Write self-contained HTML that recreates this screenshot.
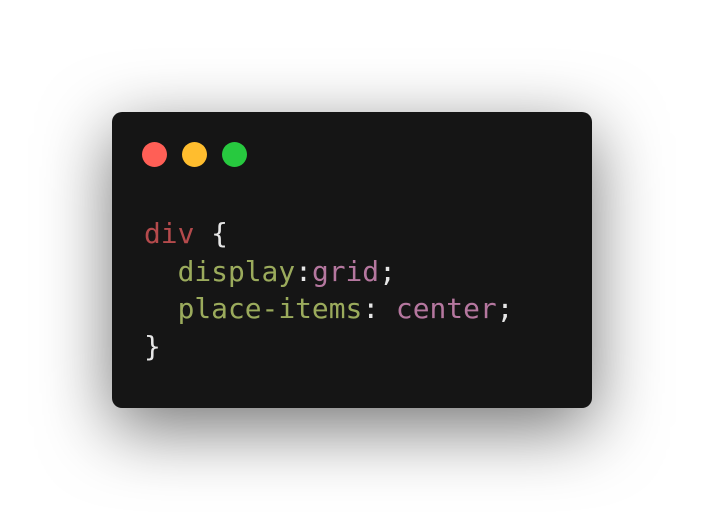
<!DOCTYPE html>
<html><head><style>
html,body{margin:0;width:704px;height:520px;background:#fff;overflow:hidden}
.card{position:absolute;left:112px;top:112px;width:480px;height:296px;background:#151515;border-radius:10px;box-shadow:0 20px 70px rgba(0,0,0,0.55)}
.dot{position:absolute;top:30px;width:25px;height:25px;border-radius:50%}
pre{position:absolute;left:32px;top:103px;margin:0;font-family:"DejaVu Sans Mono","Liberation Mono",monospace;font-size:27.9px;line-height:37.5px;color:#e6e6e6}
.r{color:#b54a4c}.g{color:#9bab5c}.p{color:#b5779f}
</style></head><body>
<div class="card">
<div class="dot" style="left:29.5px;background:#ff5f56"></div>
<div class="dot" style="left:69.5px;background:#ffbd2e"></div>
<div class="dot" style="left:109.5px;background:#27c93f"></div>
<pre><span class="r">div</span> {
  <span class="g">display</span>:<span class="p">grid</span>;
  <span class="g">place-items</span>: <span class="p">center</span>;
}</pre>
</div>
</body></html>
